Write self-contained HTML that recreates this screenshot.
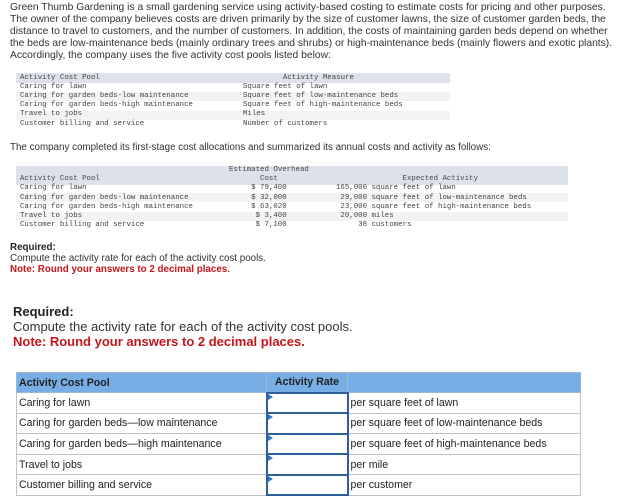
<!DOCTYPE html>
<html><head><style>
*{margin:0;padding:0;box-sizing:border-box}
body{width:626px;height:495px;background:#fff;position:relative;overflow:hidden;font-family:"Liberation Sans",Arial,sans-serif;color:#333}
.a{position:absolute;white-space:pre}
.p{left:10px;font-size:10.3px;line-height:12px;color:#333;top:2px}
.m{font-family:"Liberation Mono",monospace;font-size:7.4px;color:#444;line-height:9.2px}
.band{position:absolute;background:#dde1ea}
.alt{position:absolute;background:#f3f3f3}
.s{font-size:9.8px;color:#333}
.red{color:#c3151c;font-weight:bold}
table{position:absolute;left:16px;top:372px;border-collapse:collapse;font-size:10.6px;color:#222}
td{border:1px solid #b9c4cf;height:20.6px;padding:0 2px;vertical-align:middle}
th{background:#78aee6;border:1px solid #a4b8cc;height:20px;font-weight:bold;text-align:left;padding:0 2px}
td.in{border:2px solid #2f5f9a;position:relative}
td.in:before{content:"";position:absolute;left:0;top:0;border-left:5px solid #2e75c9;border-top:3px solid transparent;border-bottom:3px solid transparent}
</style></head><body>
<div class="a p">Green Thumb Gardening is a small gardening service using activity-based costing to estimate costs for pricing and other purposes.
The owner of the company believes costs are driven primarily by the size of customer lawns, the size of customer garden beds, the
distance to travel to customers, and the number of customers. In addition, the costs of maintaining garden beds depend on whether
the beds are low-maintenance beds (mainly ordinary trees and shrubs) or high-maintenance beds (mainly flowers and exotic plants).
Accordingly, the company uses the five activity cost pools listed below:</div>

<div class="band" style="left:16px;top:73px;width:434px;height:9.5px"></div>
<div class="alt" style="left:16px;top:92px;width:434px;height:9px"></div>
<div class="alt" style="left:16px;top:110.5px;width:434px;height:9px"></div>
<div class="a m" style="left:20px;top:73.5px">Activity Cost Pool
Caring for lawn
Caring for garden beds-low maintenance
Caring for garden beds-high maintenance
Travel to jobs
Customer billing and service</div>
<div class="a m" style="left:243px;top:73.5px">         Activity Measure
Square feet of lawn
Square feet of low-maintenance beds
Square feet of high-maintenance beds
Miles
Number of customers</div>

<div class="a s" style="left:10px;top:142px">The company completed its first-stage cost allocations and summarized its annual costs and activity as follows:</div>

<div class="band" style="left:16px;top:166px;width:552px;height:18.5px"></div>
<div class="alt" style="left:16px;top:193px;width:552px;height:9px"></div>
<div class="alt" style="left:16px;top:211.5px;width:552px;height:9px"></div>
<div class="a m" style="left:20px;top:166px">
Activity Cost Pool
Caring for lawn
Caring for garden beds-low maintenance
Caring for garden beds-high maintenance
Travel to jobs
Customer billing and service</div>
<div class="a m" style="left:229px;top:166px">Estimated Overhead
       Cost
     $ 79,400
     $ 32,000
     $ 63,020
      $ 3,400
      $ 7,100</div>
<div class="a m" style="left:336px;top:166px">
               Expected Activity
165,000 square feet of lawn
 29,000 square feet of low-maintenance beds
 23,000 square feet of high-maintenance beds
 20,000 miles
     38 customers</div>

<div class="a s" style="left:10px;top:242px;font-weight:bold;color:#222">Required:</div>
<div class="a s" style="left:10px;top:253px">Compute the activity rate for each of the activity cost pools.</div>
<div class="a s red" style="left:10px;top:264px">Note: Round your answers to 2 decimal places.</div>

<div class="a" style="left:13px;top:304px;font-size:13px;font-weight:bold;color:#222">Required:</div>
<div class="a" style="left:13px;top:319px;font-size:13px;color:#333">Compute the activity rate for each of the activity cost pools.</div>
<div class="a red" style="left:13px;top:334px;font-size:13px">Note: Round your answers to 2 decimal places.</div>

<table>
<tr><th style="width:250px">Activity Cost Pool</th><th style="width:81px;text-align:center">Activity Rate</th><th style="width:233px"></th></tr>
<tr><td>Caring for lawn</td><td class="in"></td><td>per square feet of lawn</td></tr>
<tr><td>Caring for garden beds—low maintenance</td><td class="in"></td><td>per square feet of low-maintenance beds</td></tr>
<tr><td>Caring for garden beds—high maintenance</td><td class="in"></td><td>per square feet of high-maintenance beds</td></tr>
<tr><td>Travel to jobs</td><td class="in"></td><td>per mile</td></tr>
<tr><td>Customer billing and service</td><td class="in"></td><td>per customer</td></tr>
</table>
</body></html>
